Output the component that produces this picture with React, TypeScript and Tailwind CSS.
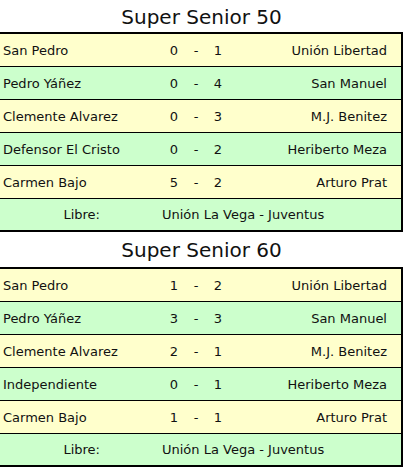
const sections = [
  {
    title: 'Super Senior 50',
    matches: [
      ['San Pedro', '0', '1', 'Unión Libertad'],
      ['Pedro Yáñez', '0', '4', 'San Manuel'],
      ['Clemente Alvarez', '0', '3', 'M.J. Benitez'],
      ['Defensor El Cristo', '0', '2', 'Heriberto Meza'],
      ['Carmen Bajo', '5', '2', 'Arturo Prat'],
    ],
    libre: 'Unión La Vega - Juventus',
  },
  {
    title: 'Super Senior 60',
    matches: [
      ['San Pedro', '1', '2', 'Unión Libertad'],
      ['Pedro Yáñez', '3', '3', 'San Manuel'],
      ['Clemente Alvarez', '2', '1', 'M.J. Benitez'],
      ['Independiente', '0', '1', 'Heriberto Meza'],
      ['Carmen Bajo', '1', '1', 'Arturo Prat'],
    ],
    libre: 'Unión La Vega - Juventus',
  },
];

export default function App() {
  return (
    <div className="w-[403px] h-[467px] overflow-hidden bg-white text-[#111] font-['DejaVu_Sans',Verdana,sans-serif]">
      {sections.map((s, i) => (
        <div key={s.title}>
          <div className={`text-center text-[20px] leading-[24px] ${i === 0 ? 'pt-[5px] pb-[3px]' : 'pt-[6px] pb-[5px]'}`}>
            {s.title}
          </div>
          <div className="w-[403px] border-t-2 border-b-2 border-r-2 border-black text-[13px]">
            {s.matches.map((m, j) => (
              <div
                key={j}
                className={`flex items-center h-[33px] pt-[2px] border-b border-black ${j % 2 === 0 ? 'bg-[#ffffcc]' : 'bg-[#ccffcc]'}`}
              >
                <div className="w-[160px] pl-[3px]">{m[0]}</div>
                <div className="w-[28px] text-center">{m[1]}</div>
                <div className="w-[16px] text-center">-</div>
                <div className="w-[28px] text-center">{m[2]}</div>
                <div className="flex-1 text-right pr-[14px]">{m[3]}</div>
              </div>
            ))}
            <div className="flex items-center h-[31px] pt-[1px] bg-[#ccffcc]">
              <div className="w-[100px] text-right">Libre:</div>
              <div className="flex-1 pl-[62px]">{s.libre}</div>
            </div>
          </div>
        </div>
      ))}
    </div>
  );
}
